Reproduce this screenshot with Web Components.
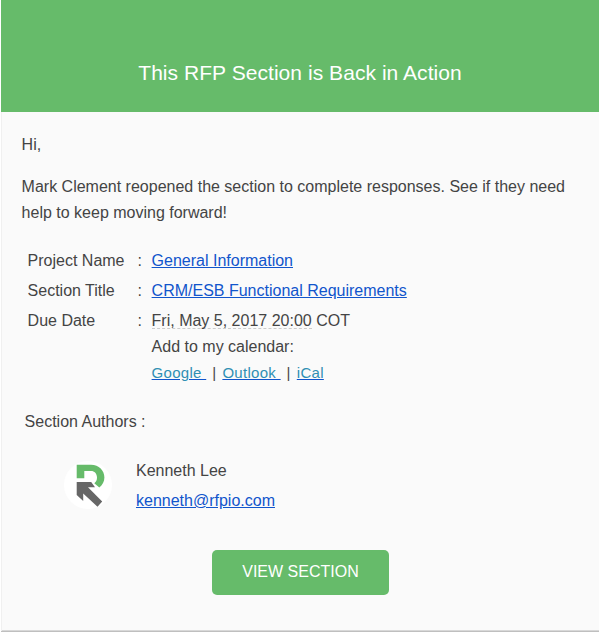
<!DOCTYPE html>
<html lang="en">
<head>
<meta charset="utf-8">
<title>RFP section reopened</title>
<style>
html, body { margin: 0; background: #fff; }
body { font: 16px/26px "Liberation Sans", Arial, sans-serif; color: #444; overflow: hidden; }
</style>
</head>
<body>
<mail-card>
  <mail-header slot="header">This RFP Section is Back in Action</mail-header>
  <mail-message></mail-message>
  <detail-list></detail-list>
  <author-block></author-block>
  <action-button>VIEW SECTION</action-button>
</mail-card>
<script>
const define = (name, html) => customElements.define(name, class extends HTMLElement {
  constructor() {
    super();
    this.attachShadow({ mode: 'open' }).innerHTML = html;
  }
});

define('mail-card', `<style>
:host { display: block; box-sizing: border-box; height: 632px; margin-left: 1px; background: #fafafa; border-bottom: 1px solid #bfbfbf; box-shadow: inset 0 -1px #d8d8d8; }
.body { box-sizing: border-box; height: 519px; border-left: 1px solid #f0f0f0; padding: 20px 20px 0 19.6px; }
</style><slot name="header"></slot><div class="body"><slot></slot></div>`);

define('mail-header', `<style>
:host { display: block; box-sizing: border-box; height: 112px; padding-top: 60px; background: #66bb6a; color: #fff; text-align: center; font-size: 21px; letter-spacing: .05px; }
</style><slot></slot>`);

define('mail-message', `<style>
:host { display: block; }
p { margin: 0 0 16px; }
p + p { margin: 0; }
</style><p>Hi,</p><p>Mark Clement reopened the section to complete responses. See if they need help to keep moving forward!</p>`);

define('text-link', `<style>
:host { display: inline; }
a { color: var(--link-color, #15c); text-decoration: underline; text-decoration-color: #15c; white-space: pre; }
</style><a href="#"><slot></slot></a>`);

define('detail-list', `<style>
:host { display: grid; grid-template-columns: 110px 14px 1fr; row-gap: 4px; margin-top: 22px; padding-left: 6px; }
.date { border-bottom: 1px dashed #ccc; display: inline-block; line-height: 18px; height: 16px; }
.cal { font-size: 15px; letter-spacing: .3px; --link-color: #2f8fb3; white-space: pre; }
.cal i { font-style: normal; padding: 0 1.5px; }
</style>
<span>Project Name</span><span>:</span><text-link>General Information</text-link>
<span>Section Title</span><span>:</span><text-link>CRM/ESB Functional Requirements</text-link>
<span>Due Date</span><span>:</span>
<div><span class="date">Fri, May 5, 2017 20:00</span> COT<div>Add to my calendar:</div><div class="cal"><text-link>Google </text-link><i> | </i><text-link>Outlook </text-link><i> | </i><text-link>iCal</text-link></div></div>`);

define('rfpio-avatar', `<style>
:host { display: block; width: 48px; height: 48px; }
svg { display: block; }
</style><svg width="48" height="48" viewBox="0 0 48 48"><circle cx="24" cy="24" r="24" fill="#fff"/>
<path fill="#66bb6a" d="M12.700 3.700H27C35 3.700 40.400 9.500 40.400 16.500C40.400 20.500 38.500 24 35.300 26.400L30.300 22.300C32.200 20.800 33 19 33 16.500C33 12.700 30.500 10 27 10H20.300V17.300H12.700Z"/>
<path fill="#666" d="M12.700 21H27.200L31 26.300H24L38.200 40.600L33.500 45.700L19.200 32.500V40L12.700 34Z"/></svg>`);

define('author-block', `<style>
:host { display: block; margin-top: 23px; }
.title { padding-left: 3px; }
.row { display: flex; gap: 24px; padding-left: 42.4px; margin-top: 23px; }
rfpio-avatar { margin-top: 3px; }
.info { display: grid; row-gap: 4px; }
</style><div class="title">Section Authors :</div>
<div class="row"><rfpio-avatar></rfpio-avatar><div class="info"><span>Kenneth Lee</span><text-link>kenneth@rfpio.com</text-link></div></div>`);

define('action-button', `<style>
:host { display: block; margin: 36px 0 0 190.4px; }
button { display: block; width: 177px; height: 45px; padding: 0 0 2px; border: 0; border-radius: 5px; background: #66bb6a; color: #fff; font: inherit; }
</style><button><slot></slot></button>`);
</script>
</body>
</html>
